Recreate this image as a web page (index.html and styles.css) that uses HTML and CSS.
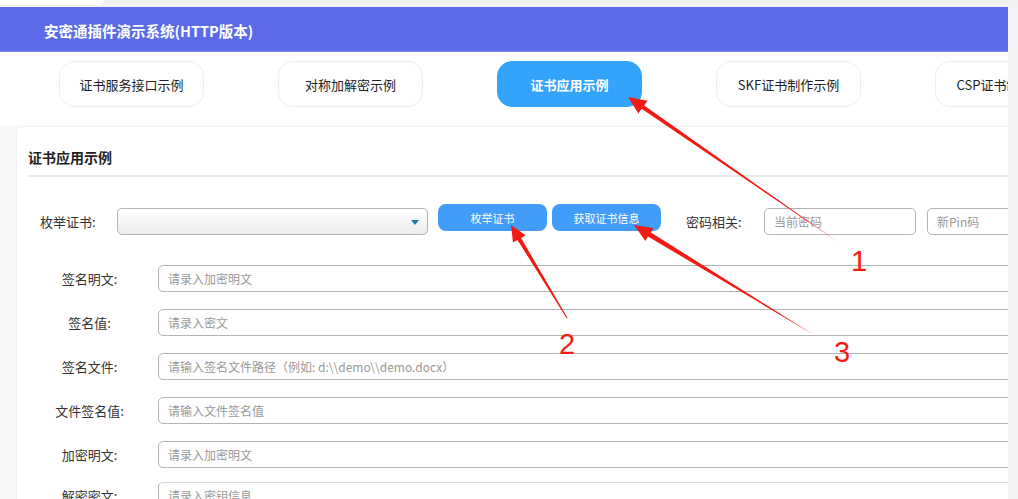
FILE: index.html
```html
<!DOCTYPE html>
<html lang="zh-CN">
<head>
    <meta charset="UTF-8">
    <meta name="viewport" content="width=device-width, initial-scale=1.0">
    <title>安密通插件演示系统(HTTP版本)</title>
    <link rel="stylesheet" href="styles.css">
</head>
<body>
    <div class="topstrip"><div class="topstrip-tab"></div></div>
    <div class="page">
        <header class="header">
            <h1>安密通插件演示系统(HTTP版本)</h1>
        </header>
        <nav class="tabs">
            <div class="tab">证书服务接口示例</div>
            <div class="tab">对称加解密示例</div>
            <div class="tab active">证书应用示例</div>
            <div class="tab">SKF证书制作示例</div>
            <div class="tab">CSP证书制作示例</div>
        </nav>
        <main class="content">
            <section class="card">
                <h2 class="card-title">证书应用示例</h2>
                <div class="toolbar">
                    <label class="tool-label">枚举证书:</label>
                    <div class="select"></div>
                    <button class="btn btn-first">枚举证书</button>
                    <button class="btn">获取证书信息</button>
                    <label class="tool-label pwd-label">密码相关:</label>
                    <input type="text" class="field small" placeholder="当前密码">
                    <input type="text" class="field small" placeholder="新Pin码">
                </div>
                <div class="form-row">
                    <label>签名明文:</label>
                    <input type="text" class="field" placeholder="请录入加密明文">
                </div>
                <div class="form-row">
                    <label>签名值:</label>
                    <input type="text" class="field" placeholder="请录入密文">
                </div>
                <div class="form-row">
                    <label>签名文件:</label>
                    <input type="text" class="field" placeholder="请输入签名文件路径（例如: d:\\demo\\demo.docx）">
                </div>
                <div class="form-row">
                    <label>文件签名值:</label>
                    <input type="text" class="field" placeholder="请输入文件签名值">
                </div>
                <div class="form-row">
                    <label>加密明文:</label>
                    <input type="text" class="field" placeholder="请录入加密明文">
                </div>
                <div class="form-row last">
                    <label>解密密文:</label>
                    <textarea class="field area" placeholder="请录入密钥信息"></textarea>
                </div>
            </section>
        </main>
    </div>

    <svg class="marks" width="1018" height="499" viewBox="0 0 1018 499">
        <polygon points="628,97 647.5,100.8 644.2,105.5 838,242 641.6,108.7 638.4,113.5" />
        <polygon points="511,225 525.6,235.2 521.1,238 567.6,318 566.6,318.2 517.5,240 513,242.6" />
        <polygon points="634,225 653.3,228 650.9,232.5 814,335 647.9,236.4 645.4,241" />
        <text x="851" y="271">1</text>
        <text x="559" y="354">2</text>
        <text x="834" y="362">3</text>
    </svg>
</body>
</html>
```

FILE: styles.css
```css
html, body {
    margin: 0;
    padding: 0;
}
body {
    width: 1018px;
    height: 499px;
    overflow: hidden;
    background: #f3f3f4;
    font-family: "Noto Sans CJK SC", "Liberation Sans", sans-serif;
    color: #333;
    position: relative;
}
.topstrip {
    height: 7px;
    background: #f0f1f3;
}
.topstrip-tab {
    width: 104px;
    height: 5px;
    background: #fff;
    border-bottom-right-radius: 10px;
}
.page {
    width: 1008px;
    height: 492px;
    overflow: hidden;
    background: #f7f8f9;
}
.header {
    height: 44px;
    background: #5b6be8;
    border-bottom: 1px solid #7d89ee;
    display: flex;
    align-items: center;
    padding-left: 44px;
}
.header h1 {
    margin: 0;
    font-size: 14.5px;
    font-weight: bold;
    color: #fff;
    padding-top: 3px;
}
.tabs {
    height: 74px;
    background: #fff;
    display: flex;
    gap: 74px;
    padding: 9px 0 0 59px;
    box-sizing: border-box;
    white-space: nowrap;
}
.tab {
    flex: none;
    width: 145px;
    height: 46px;
    box-sizing: border-box;
    border: 1px solid #ededed;
    border-radius: 15px;
    display: flex;
    align-items: center;
    justify-content: center;
    font-size: 13px;
    color: #222;
    background: #fff;
}
.tab.active {
    background: #33a3fc;
    border-color: #33a3fc;
    color: #fff;
    font-weight: bold;
}
.content {
    padding: 1px 0 0 17px;
}
.card {
    width: 1150px;
    height: 400px;
    background: #fff;
    border-radius: 4px;
    box-shadow: 0 0 4px rgba(0, 0, 0, 0.06);
    padding: 19px 11px 0 11px;
    box-sizing: border-box;
}
.card-title {
    margin: 0;
    font-size: 14px;
    font-weight: bold;
    line-height: 22px;
    color: #222;
    padding-bottom: 7px;
    border-bottom: 2px solid #e8e8e8;
}
.toolbar {
    display: flex;
    align-items: flex-start;
    margin-top: 27px;
    padding-left: 12px;
    white-space: nowrap;
}
.tool-label {
    font-size: 13px;
    line-height: 27px;
    margin-top: 4px;
    width: 77px;
    flex: none;
}
.pwd-label {
    width: 78px;
    margin-left: 25px;
}
.select {
    flex: none;
    width: 311px;
    height: 27px;
    margin-top: 4px;
    box-sizing: border-box;
    border: 1px solid #b4b4b4;
    border-radius: 5px;
    background: linear-gradient(#ffffff, #ececec);
    position: relative;
}
.select::after {
    content: "";
    position: absolute;
    right: 8px;
    top: 11px;
    border-left: 4px solid transparent;
    border-right: 4px solid transparent;
    border-top: 5px solid #1b77ae;
}
.btn {
    flex: none;
    width: 109px;
    height: 27px;
    margin-left: 5px;
    border: none;
    border-radius: 8px;
    background: #419cfa;
    color: #fff;
    font-family: inherit;
    font-size: 11px;
    padding: 0;
}
.btn-first {
    margin-left: 10px;
}
.field {
    flex: none;
    height: 27px;
    box-sizing: border-box;
    border: 1px solid #b3b3b3;
    border-radius: 5px;
    padding: 0 9px;
    font-family: inherit;
    font-size: 12px;
    color: #333;
    background: #fff;
    outline: none;
    width: 900px;
}
.field::placeholder {
    color: #999;
}
.field.small {
    width: 152px;
    margin-top: 4px;
    margin-right: 11px;
}
.form-row {
    display: flex;
    align-items: center;
    margin-top: 17px;
    padding-left: 12px;
}
.toolbar + .form-row {
    margin-top: 30px;
}
.form-row.last {
    margin-top: 14px;
    align-items: flex-start;
}
.form-row label {
    flex: none;
    width: 99px;
    text-align: center;
    font-size: 13px;
    line-height: 27px;
    margin-right: 19px;
}
.area {
    resize: none;
    padding-top: 5px;
    line-height: 16px;
    height: 40px;
    border-top-color: #d6d6d6;
}
.marks {
    position: absolute;
    left: 0;
    top: 0;
    pointer-events: none;
}
.marks polygon {
    fill: #f41a14;
}
.marks text {
    fill: #f41a14;
    font-family: "Liberation Sans", sans-serif;
    font-size: 29px;
}
```
